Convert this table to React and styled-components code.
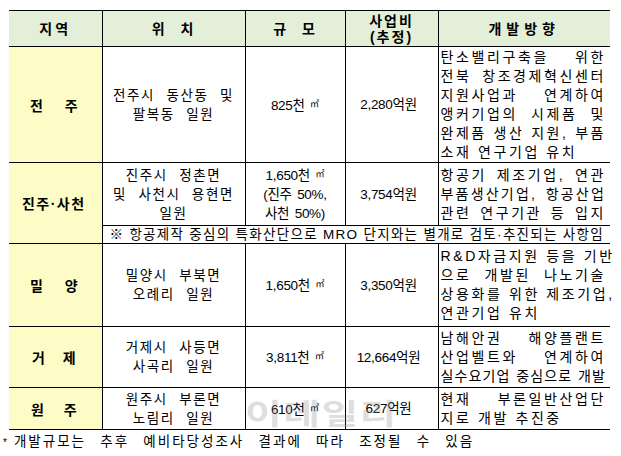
import React from "react";
import styled, { createGlobalStyle } from "styled-components";

const GlobalStyle = createGlobalStyle`
  html, body { margin: 0; padding: 0; background: #fff; }
  body {
    font-family: "Liberation Sans", "Noto Sans CJK KR", sans-serif;
    color: #000;
  }
`;

const Page = styled.div`
  position: relative;
  width: 621px;
  height: 456px;
  padding-top: 10px;
  box-sizing: border-box;
  overflow: hidden;
`;

const Table = styled.table`
  margin-left: 9px;
  width: 601px;
  table-layout: fixed;
  border-collapse: collapse;
  border-left: hidden;
  border-right: hidden;
  font-size: 13.5px;
`;

const Row = styled.tr`
  height: ${(p) => p.$h}px;
`;

const Head = styled.th`
  background: #e3efd9;
  border: 1px solid #000;
  padding: 0;
  font-size: 14px;
  font-weight: 700;
  line-height: 16px;
  letter-spacing: ${(p) => p.$ls ?? 2}px;
  word-spacing: ${(p) => p.$ws ?? 0}px;
  text-align: center;
  vertical-align: middle;
`;

const Region = styled.td`
  background: #fdfcc6;
  border: 1px solid #000;
  padding: 0 3px 0 0;
  font-size: 14px;
  font-weight: 700;
  letter-spacing: ${(p) => p.$ls ?? 0}px;
  word-spacing: ${(p) => p.$ws ?? 0}px;
  text-align: center;
  vertical-align: middle;
`;

const Place = styled.td`
  border: 1px solid #000;
  padding: 0;
  line-height: 19px;
  letter-spacing: 1.6px;
  word-spacing: 6px;
  text-align: center;
  vertical-align: middle;
`;

const Figure = styled.td`
  border: 1px solid #000;
  padding: 0 ${(p) => p.$pr ?? 0}px 0 0;
  line-height: 19px;
  letter-spacing: -0.3px;
  word-spacing: 2px;
  text-align: center;
  vertical-align: middle;
`;

const Unit = styled.span`
  font-size: 9px;
  vertical-align: 3px;
  letter-spacing: 0;
`;

const Plan = styled.td`
  border: 1px solid #000;
  padding: 0 4px 0 2px;
  font-size: 14px;
  line-height: 19px;
  vertical-align: middle;
`;

const Line = styled.span`
  display: block;
  white-space: nowrap;
  letter-spacing: ${(p) => p.$ls ?? 2.6}px;
  text-align: justify;
  text-align-last: ${(p) => (p.$last ? "left" : "justify")};
`;

const Note = styled.td`
  border: 1px solid #000;
  padding: 0 6px 0 7px;
  line-height: 17px;
  letter-spacing: 1.3px;
  white-space: nowrap;
  text-align: justify;
  text-align-last: justify;
  vertical-align: middle;
`;

const Footnote = styled.p`
  margin: 2px 0 0 3px;
  font-size: 13.5px;
  line-height: 19px;
  letter-spacing: 2px;
  word-spacing: 8.5px;
  white-space: nowrap;
`;

const Star = styled.span`
  font-size: 10px;
  margin-right: 5px;
  word-spacing: 0;
`;

const Watermark = styled.div`
  position: absolute;
  left: 245px;
  top: 398px;
  font-family: "Noto Sans CJK KR", sans-serif;
  font-size: 29px;
  line-height: 1;
  font-weight: 700;
  letter-spacing: 1px;
  color: rgba(140, 140, 140, 0.28);
  transform: scaleX(1.38);
  transform-origin: left top;
  pointer-events: none;
`;

/* plan lines: string, or [text, letterSpacing] when a line has to be squeezed */
const Lines = ({ items, fill }) =>
  items.map((t, i) => {
    const [text, ls] = Array.isArray(t) ? t : [t];
    return (
      <Line key={i} $ls={ls} $last={!fill && i === items.length - 1}>
        {text}
      </Line>
    );
  });

const Breaks = ({ items }) =>
  items.map((t, i) => (
    <React.Fragment key={i}>
      {i > 0 && <br />}
      {t}
    </React.Fragment>
  ));

const Area = ({ value }) => (
  <>
    {value}천 <Unit>㎡</Unit>
  </>
);

const rows = [
  {
    h: 116,
    region: "전 주",
    ws: 18,
    place: ["전주시 동산동 및", "팔복동 일원"],
    size: [<Area key="a" value="825" />],
    cost: "2,280억원",
    plan: [
      "탄소밸리구축을 위한",
      "전북 창조경제혁신센터",
      "지원사업과 연계하여",
      "앵커기업의 시제품 및",
      ["완제품 생산 지원, 부품", 2.5],
      "소재 연구기업 유치",
    ],
  },
  {
    h: 63,
    region: "진주·사천",
    ls: 1.5,
    place: ["진주시 정촌면", "및 사천시 용현면", "일원"],
    size: [<Area key="a" value="1,650" />, "(진주 50%,", "사천 50%)"],
    cost: "3,754억원",
    plan: ["항공기 제조기업, 연관", ["부품생산기업, 항공산업", 2.2], "관련 연구기관 등 입지"],
    fill: true,
    note: "※ 항공제작 중심의 특화산단으로 MRO 단지와는 별개로 검토·추진되는 사항임",
  },
  {
    h: 83,
    region: "밀 양",
    ws: 18,
    place: ["밀양시 부북면", "오례리 일원"],
    size: [<Area key="a" value="1,650" />],
    cost: "3,350억원",
    plan: [
      "R&D자금지원 등을 기반",
      "으로 개발된 나노기술",
      "상용화를 위한 제조기업,",
      "연관기업 유치",
    ],
  },
  {
    h: 61,
    region: "거 제",
    ws: 14,
    place: ["거제시 사등면", "사곡리 일원"],
    size: [<Area key="a" value="3,811" />],
    cost: "12,664억원",
    plan: ["남해안권 해양플랜트", "산업벨트와 연계하여", ["실수요기업 중심으로 개발", 1.1]],
    fill: true,
  },
  {
    h: 42,
    region: "원 주",
    ws: 16,
    place: ["원주시 부론면", "노림리 일원"],
    size: [<Area key="a" value="610" />],
    cost: "627억원",
    plan: ["현재 부론일반산업단", "지로 개발 추진중"],
  },
];

export default function App() {
  return (
    <Page>
      <GlobalStyle />
      <Table>
        <colgroup>
          <col style={{ width: 93 }} />
          <col style={{ width: 143 }} />
          <col style={{ width: 100 }} />
          <col style={{ width: 93 }} />
          <col style={{ width: 172 }} />
        </colgroup>
        <thead>
          <Row $h={36}>
            <Head $ls={3}>지역</Head>
            <Head $ws={8}>위 치</Head>
            <Head $ws={8}>규 모</Head>
            <Head $ls={2}>
              사업비
              <br />
              (추정)
            </Head>
            <Head $ls={5}>개발방향</Head>
          </Row>
        </thead>
        <tbody>
          {rows.map((r) => (
            <React.Fragment key={r.region}>
              <Row $h={r.h}>
                <Region rowSpan={r.note ? 2 : 1} $ws={r.ws} $ls={r.ls}>
                  {r.region}
                </Region>
                <Place>
                  <Breaks items={r.place} />
                </Place>
                <Figure>
                  <Breaks items={r.size} />
                </Figure>
                <Figure $pr={6}>{r.cost}</Figure>
                <Plan>
                  <Lines items={r.plan} fill={r.fill} />
                </Plan>
              </Row>
              {r.note && (
                <Row $h={18}>
                  <Note colSpan={4}>{r.note}</Note>
                </Row>
              )}
            </React.Fragment>
          ))}
        </tbody>
      </Table>
      <Footnote>
        <Star>*</Star>개발규모는 추후 예비타당성조사 결과에 따라 조정될 수 있음
      </Footnote>
      <Watermark>이데일리</Watermark>
    </Page>
  );
}
